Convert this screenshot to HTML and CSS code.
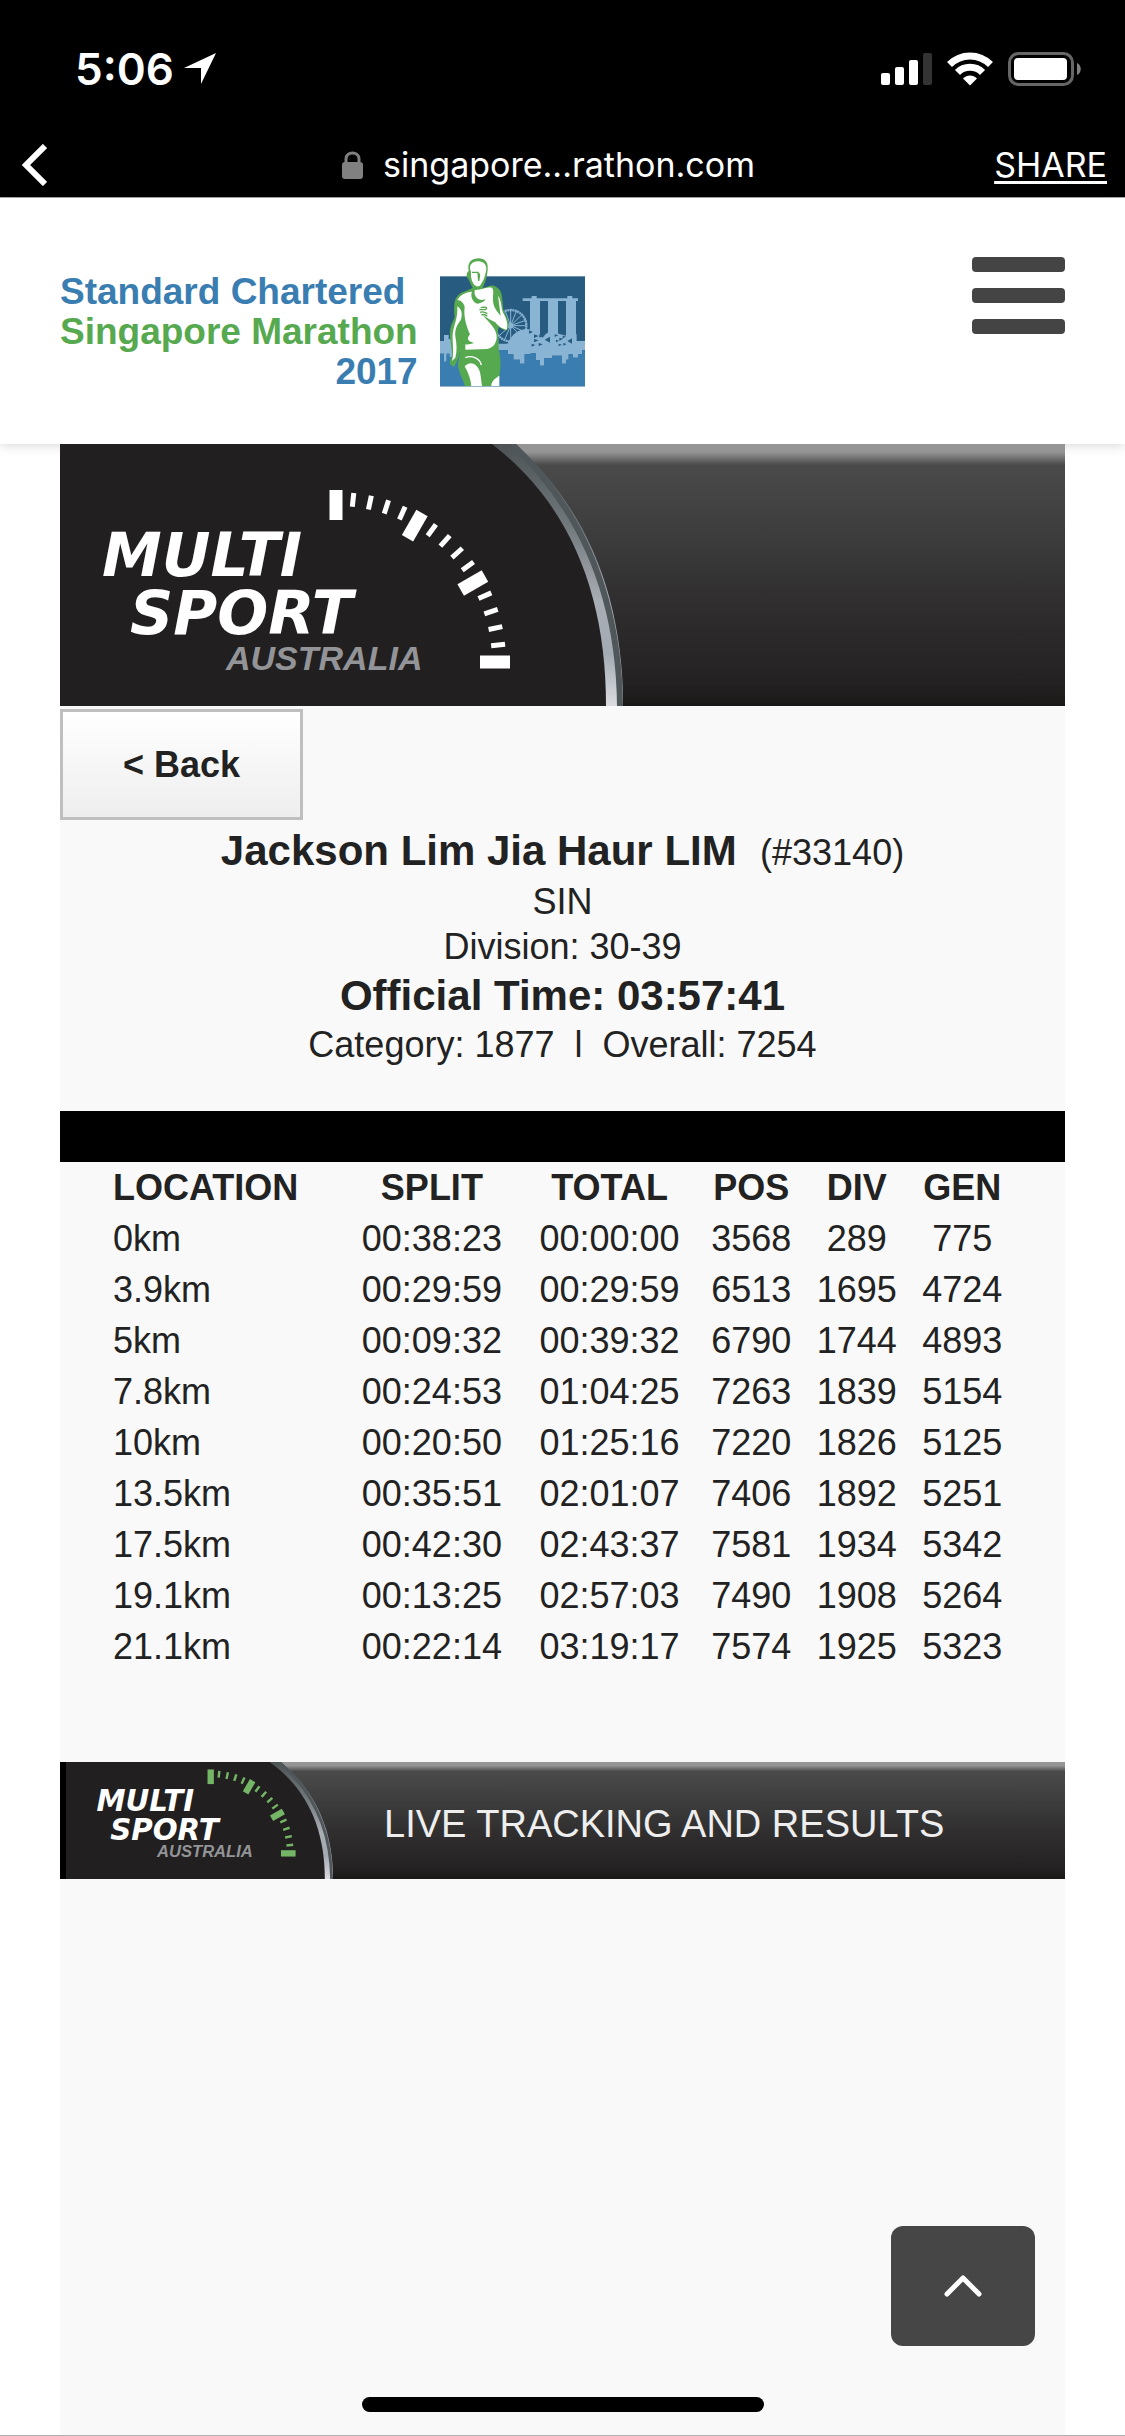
FILE: index.html
```html
<!DOCTYPE html>
<html lang="en">
<head>
<meta charset="utf-8">
<meta name="viewport" content="width=device-width, initial-scale=1">
<title>Standard Chartered Singapore Marathon 2017 - Results</title>
<link rel="stylesheet" href="styles.css">
</head>
<body>
<svg class="defs" aria-hidden="true">
  <defs>
    <linearGradient id="silver" x1="0" y1="0" x2="0" y2="1">
      <stop offset="0" stop-color="#4d5355"/>
      <stop offset=".3" stop-color="#6f777b"/>
      <stop offset=".6" stop-color="#a9adb4"/>
      <stop offset=".8" stop-color="#a3abb3"/>
      <stop offset="1" stop-color="#dcdce0"/>
    </linearGradient>
    <g id="dome">
      <path d="M0 0H455C525 62 563 150 563 262H0Z" fill="url(#silver)"/>
      <path d="M452 0C522 66 559 152 560 262" fill="none" stroke="#50575b" stroke-width="6"/>
      <path d="M0 0H432C510 60 546 150 546 262H0Z" fill="#221f20"/>
    </g>
    <path id="s" d="M276 48v14"/>
    <g id="ticks" stroke="currentColor" fill="none">
      <g stroke-width="13">
        <path d="M276 46v30"/>
        <path d="M276 46v29" transform="rotate(30 276 218)"/>
        <path d="M276 46v28" transform="rotate(60 276 218)"/>
        <path d="M276 44v30" transform="rotate(90 276 218)"/>
      </g>
      <g stroke-width="5">
        <use href="#s" transform="rotate(6 276 218)"/>
        <use href="#s" transform="rotate(12 276 218)"/>
        <use href="#s" transform="rotate(18 276 218)"/>
        <use href="#s" transform="rotate(24 276 218)"/>
        <use href="#s" transform="rotate(36 276 218)"/>
        <use href="#s" transform="rotate(42 276 218)"/>
        <use href="#s" transform="rotate(48 276 218)"/>
        <use href="#s" transform="rotate(54 276 218)"/>
        <use href="#s" transform="rotate(66 276 218)"/>
        <use href="#s" transform="rotate(72 276 218)"/>
        <use href="#s" transform="rotate(78 276 218)"/>
        <use href="#s" transform="rotate(84 276 218)"/>
      </g>
    </g>
  </defs>
</svg>

<div class="chrome">
  <div class="status">
    <div class="clock">
      <span>5:06</span>
      <svg width="32" height="32" viewBox="0 0 32 32" aria-hidden="true"><path d="M0 15L32 0L17 31V15Z" fill="#fff"/></svg>
    </div>
    <div class="signals">
      <svg width="51" height="32" viewBox="0 0 51 32" fill="#fff" aria-hidden="true">
        <rect y="20" width="9" height="12" rx="2"/><rect x="14" y="14" width="9" height="18" rx="2"/><rect x="28" y="7" width="9" height="25" rx="2"/><rect x="42" width="9" height="32" rx="2" fill="#333"/>
      </svg>
      <svg width="46" height="34" viewBox="0 0 46 34" aria-hidden="true">
        <g fill="none" stroke="#fff" stroke-width="7"><path d="M2.500 12.500C14 1 32 1 43.500 12.500"/><path d="M10.500 20.500C17 13.500 29 13.500 35.500 20.500"/></g>
        <path d="M16 26.500C20 22.500 26 22.500 30 26.500L23 33.500Z" fill="#fff"/>
      </svg>
      <svg width="73" height="34" viewBox="0 0 73 34" aria-hidden="true">
        <rect x="1.500" y="1.500" width="63" height="31" rx="9" fill="none" stroke="#666" stroke-width="3"/><rect x="6" y="6" width="53" height="22" rx="4" fill="#fff"/><path d="M69 11C74 13 74 21 69 23Z" fill="#808080"/>
      </svg>
    </div>
  </div>
  <nav class="bar">
    <button class="bar-back" type="button" aria-label="Back"><svg width="25" height="42" viewBox="0 0 25 42"><path d="M23 2L4 21L23 40" fill="none" stroke="#fff" stroke-width="6"/></svg></button>
    <div class="site">
      <svg width="21" height="28" viewBox="0 0 21 28" aria-hidden="true"><path d="M4 12V8C4 0 17 0 17 8V12" fill="none" stroke="#808080" stroke-width="3"/><rect y="11" width="21" height="17" rx="3" fill="#808080"/></svg>
      <span>singapore...rathon.com</span>
    </div>
    <a class="share" href="#share">SHARE</a>
  </nav>
</div>

<header class="header">
  <a class="logo" href="#home">
    <span class="logo-text"><span class="blue">Standard Chartered</span><span class="green">Singapore Marathon</span><span class="blue year">2017</span></span>
    <svg width="145" height="130" viewBox="30 20 435 390" aria-hidden="true">
      <rect x="30" y="78" width="435" height="330" fill="#275b80"/>
      <g fill="#8ab4d4">
        <path d="M278 144H305V137H320V144H412V137H427V144H444V152H438V272H408V152H384V272H354V152H330V272H300V152H278Z"/>
        <path d="M30 272H42V254H56V266H74L80 250H92L100 264H205V280H232C248 250 264 238 288 236C312 236 322 250 338 262C350 246 358 242 370 246L408 256L440 252V272H465V300H456V312H444V322H428V312H416V328H408V340H396V316H366V324H342V346H330V330H318V308H302V312H284V340H270V328H250V312H234V300H200V312H120L90 306H76V302H66V320H58V310H50V334H42V310H30Z"/>
      </g>
      <g fill="none" stroke="#8ab4d4">
        <circle cx="242" cy="226" r="47" stroke-width="7" stroke-dasharray="6 1.500"/>
        <path stroke-width="3" d="M242 226V180M242 226L259 183M242 226L275 194M242 226L287 210M242 226H289M242 226L284 244M242 226L274 258M242 226L226 183M242 226L210 194M242 226L200 210M242 226L205 258M242 226L224 268M242 226V272"/>
        <circle cx="242" cy="226" r="8" fill="#8ab4d4"/>
      </g>
      <path fill="#275b80" d="M297 240l12 5-12 5zM312 252l14 5-14 6zM328 252l12 5-12 5zM312 266l14 4-14 6zM344 268l16-9v18zM305 280l11 4-11 5zM326 278l12 4-12 6zM374 252l11 3-11 5zM388 262l12 3-12 6zM398 256l10 3-10 5zM378 268l9 3-9 5zM412 272l14-8v16zM400 278l10 3-10 5zM386 280l10 3-10 5z"/>
      <path fill="#397db1" d="M30 310H42V334H50V310H58V320H66V302H76V306L120 312H200V300H234V312H250V328H270V340H284V312H302V308H318V330H330V346H342V324H366V316H396V340H408V328H416V312H428V322H444V312H456V300H465V408H30Z"/>
      <path fill="#57a950" d="M128 112C120 100 118 88 112 82C108 76 110 66 116 62C110 34 128 24 146 24C164 24 173 36 173 50C174 72 166 98 158 112C168 114 178 104 190 106C208 112 214 124 216 138L220 178C226 194 236 208 236 220C236 232 232 244 222 240L206 230C200 252 208 274 206 296C214 328 212 352 208 378L206 407H104C104 396 90 378 84 348C84 330 90 316 92 300C88 316 82 334 72 350L60 342C58 330 66 322 66 312C66 290 58 262 60 244C62 222 70 214 74 200C72 180 70 156 80 140C92 122 110 124 128 112Z"/>
      <path fill="#fff" d="M123 64C114 46 126 32 146 33C160 34 168 42 169 54C167 78 158 96 150 106C142 112 132 106 128 96C124 88 122 76 123 64ZM126 124C120 136 128 156 142 160C154 158 164 154 166 146C152 154 130 144 134 120C160 116 172 110 186 112C194 120 186 140 190 158C192 174 206 190 212 196L204 136C216 150 212 178 222 192C232 212 234 226 230 238C214 236 204 226 196 216C184 210 170 202 158 194C180 220 202 238 200 262C198 280 190 292 170 296L106 298V282C114 284 124 280 132 278C108 272 112 262 120 252C110 230 100 200 104 170C100 152 86 148 82 150C88 136 108 124 126 124ZM82 168C96 178 98 192 92 210C80 224 74 240 76 258C80 280 82 300 76 322L66 332C74 306 66 276 68 252C70 226 84 206 82 168ZM104 348C124 328 144 344 150 366C154 384 154 396 156 407H124C122 388 116 368 104 348ZM184 407C184 394 194 384 208 376V407Z"/>
      <path d="M126 66H144L146 92M142 68C154 68 146 84 146 92M148 178H166C176 170 164 170 152 172M150 186C160 182 166 186 172 190M154 194C162 190 166 192 172 198M116 318C138 316 150 328 154 340" fill="none" stroke="#57a950" stroke-width="4"/>
      <path d="M106 322C126 314 150 324 154 344" fill="none" stroke="#fff" stroke-width="4"/>
    </svg>
  </a>
  <button class="menu" type="button" aria-label="Menu"><span></span><span></span><span></span></button>
</header>

<main class="panel">
  <div class="banner">
    <svg width="570" height="262" viewBox="0 0 570 262" role="img" aria-label="Multi Sport Australia">
      <use href="#dome"/>
      <g color="#fff"><use href="#ticks"/></g>
      <g class="mark"><text x="42" y="132">MULTI</text><text x="70" y="190">SPORT</text></g>
      <text class="mark-sub" x="166" y="226">AUSTRALIA</text>
    </svg>
  </div>
  <button class="back" type="button">&lt; Back</button>
  <section class="runner">
    <h1>Jackson Lim Jia Haur LIM&nbsp; <span>(#33140)</span></h1>
    <p>SIN</p>
    <p>Division: 30-39</p>
    <h2>Official Time: 03:57:41</h2>
    <p>Category: 1877 &nbsp;l&nbsp; Overall: 7254</p>
  </section>
  <div class="rule"></div>
  <div class="splits">
    <table>
      <colgroup><col><col class="time"><col class="time"><col class="rank"><col class="rank"><col class="rank"></colgroup>
      <thead><tr><th>LOCATION</th><th>SPLIT</th><th>TOTAL</th><th>POS</th><th>DIV</th><th>GEN</th></tr></thead>
      <tbody>
        <tr><td>0km</td><td>00:38:23</td><td>00:00:00</td><td>3568</td><td>289</td><td>775</td></tr>
        <tr><td>3.9km</td><td>00:29:59</td><td>00:29:59</td><td>6513</td><td>1695</td><td>4724</td></tr>
        <tr><td>5km</td><td>00:09:32</td><td>00:39:32</td><td>6790</td><td>1744</td><td>4893</td></tr>
        <tr><td>7.8km</td><td>00:24:53</td><td>01:04:25</td><td>7263</td><td>1839</td><td>5154</td></tr>
        <tr><td>10km</td><td>00:20:50</td><td>01:25:16</td><td>7220</td><td>1826</td><td>5125</td></tr>
        <tr><td>13.5km</td><td>00:35:51</td><td>02:01:07</td><td>7406</td><td>1892</td><td>5251</td></tr>
        <tr><td>17.5km</td><td>00:42:30</td><td>02:43:37</td><td>7581</td><td>1934</td><td>5342</td></tr>
        <tr><td>19.1km</td><td>00:13:25</td><td>02:57:03</td><td>7490</td><td>1908</td><td>5264</td></tr>
        <tr><td>21.1km</td><td>00:22:14</td><td>03:19:17</td><td>7574</td><td>1925</td><td>5323</td></tr>
      </tbody>
    </table>
  </div>
  <footer class="banner banner-small">
    <svg width="280" height="117" viewBox="0 0 280 117" role="img" aria-label="Multi Sport Australia">
      <use href="#dome" transform="scale(.485 .447)"/>
      <rect width="6" height="117"/>
      <g transform="translate(16 -15) scale(.488)">
        <g color="#74b566"><use href="#ticks"/></g>
        <g class="mark"><text x="42" y="132">MULTI</text><text x="70" y="190">SPORT</text></g>
        <text class="mark-sub" x="166" y="226">AUSTRALIA</text>
      </g>
    </svg>
    <span class="tagline">LIVE TRACKING AND RESULTS</span>
  </footer>
</main>

<button class="to-top" type="button" aria-label="Back to top"><svg width="38" height="22" viewBox="0 0 38 22"><path d="M3 19L19 3L35 19" fill="none" stroke="#fff" stroke-width="5" stroke-linecap="round" stroke-linejoin="round"/></svg></button>
<div class="home-indicator"></div>
</body>
</html>
```
FILE: styles.css
```css
* { box-sizing: border-box; }
body {
  margin: 0;
  min-height: 100vh;
  display: flex;
  flex-direction: column;
  background: #fff;
  color: #222;
  font: 36px/45px "Liberation Sans", Arial, sans-serif;
  border-bottom: 1px solid #b0b0b0;
}
button { margin: 0; padding: 0; border: 0; background: none; font: inherit; color: inherit; cursor: pointer; }
svg { display: block; flex: none; }
.defs { position: absolute; width: 0; height: 0; }

.chrome { background: #000; color: #fff; font-family: Inter, sans-serif; border-bottom: 1px solid #b0b0b0; }
.status { display: flex; justify-content: space-between; align-items: center; height: 138px; padding: 0 44px 0 75px; }
.clock { display: flex; align-items: center; gap: 10px; font-size: 44px; font-weight: 600; }
.signals { display: flex; align-items: center; gap: 15px; }
.bar { display: grid; grid-template-columns: 1fr auto 1fr; align-items: center; height: 59px; padding: 0 18px 6px 22px; }
.bar-back { justify-self: start; }
.site { display: flex; align-items: center; gap: 20px; margin-right: 32px; font-size: 34px; }
.share { justify-self: end; color: #fff; font-size: 34px; text-underline-offset: 4px; text-decoration-thickness: 3px; }

.header {
  position: relative;
  z-index: 0;
  display: flex;
  justify-content: space-between;
  align-items: flex-start;
  padding: 59px 60px 52px;
  background: #fff;
  box-shadow: 0 0 12px rgba(0, 0, 0, .2);
}
.logo { display: flex; align-items: flex-end; gap: 22px; text-decoration: none; }
.logo svg { margin-bottom: 5px; }
.logo-text { display: flex; flex-direction: column; font-size: 37px; line-height: 40px; font-weight: bold; }
.blue { color: #397db1; }
.green { color: #57a950; }
.year { align-self: flex-end; }
.menu { display: grid; gap: 16px; width: 93px; }
.menu span { height: 15px; border-radius: 4px; background: #444; }

.panel { position: relative; flex: 1; margin: 0 60px; background: #f9f9f9; }
.banner {
  background: linear-gradient(#959595 0, #959595 3%, #4a4a4b 8%, #3b3b3c 38%, #2f2d2e 62%, #242223 90%, #1b1917 100%);
}
.mark { font: italic bold 60px "DejaVu Sans", sans-serif; fill: #fff; }
.mark-sub { font: italic bold 34px "Liberation Sans", Arial, sans-serif; fill: #929497; }
.back {
  display: block;
  width: 243px;
  height: 111px;
  margin-top: 3px;
  border: 3px solid #bfbfbf;
  background: linear-gradient(#fff, #eee);
  font-weight: bold;
}
.runner { padding: 4px 0 44px; text-align: center; }
.runner p, .runner h1, .runner h2 { margin: 0; }
.runner h1, .runner h2 { font-size: 42px; line-height: 53px; }
.runner h1 span { font-size: 36px; font-weight: normal; }
.rule { height: 51px; background: #000; }
.splits { padding: 0 50px 90px 53px; }
table { width: 100%; table-layout: fixed; border-collapse: collapse; }
.time { width: 19.7%; }
.rank { width: 11.7%; }
th, td { height: 51px; padding: 0; text-align: center; white-space: nowrap; }
th:first-child, td:first-child { text-align: left; }
.banner-small { display: flex; align-items: center; gap: 44px; }
.tagline { color: #eee; font-size: 38px; padding-top: 8px; }

.to-top {
  position: fixed;
  right: 90px;
  bottom: 90px;
  display: grid;
  place-items: center;
  width: 144px;
  height: 120px;
  border-radius: 12px;
  background: #464646;
}
.home-indicator {
  position: fixed;
  left: 50%;
  bottom: 24px;
  width: 402px;
  height: 15px;
  margin-left: -201px;
  border-radius: 8px;
  background: #000;
}
```
